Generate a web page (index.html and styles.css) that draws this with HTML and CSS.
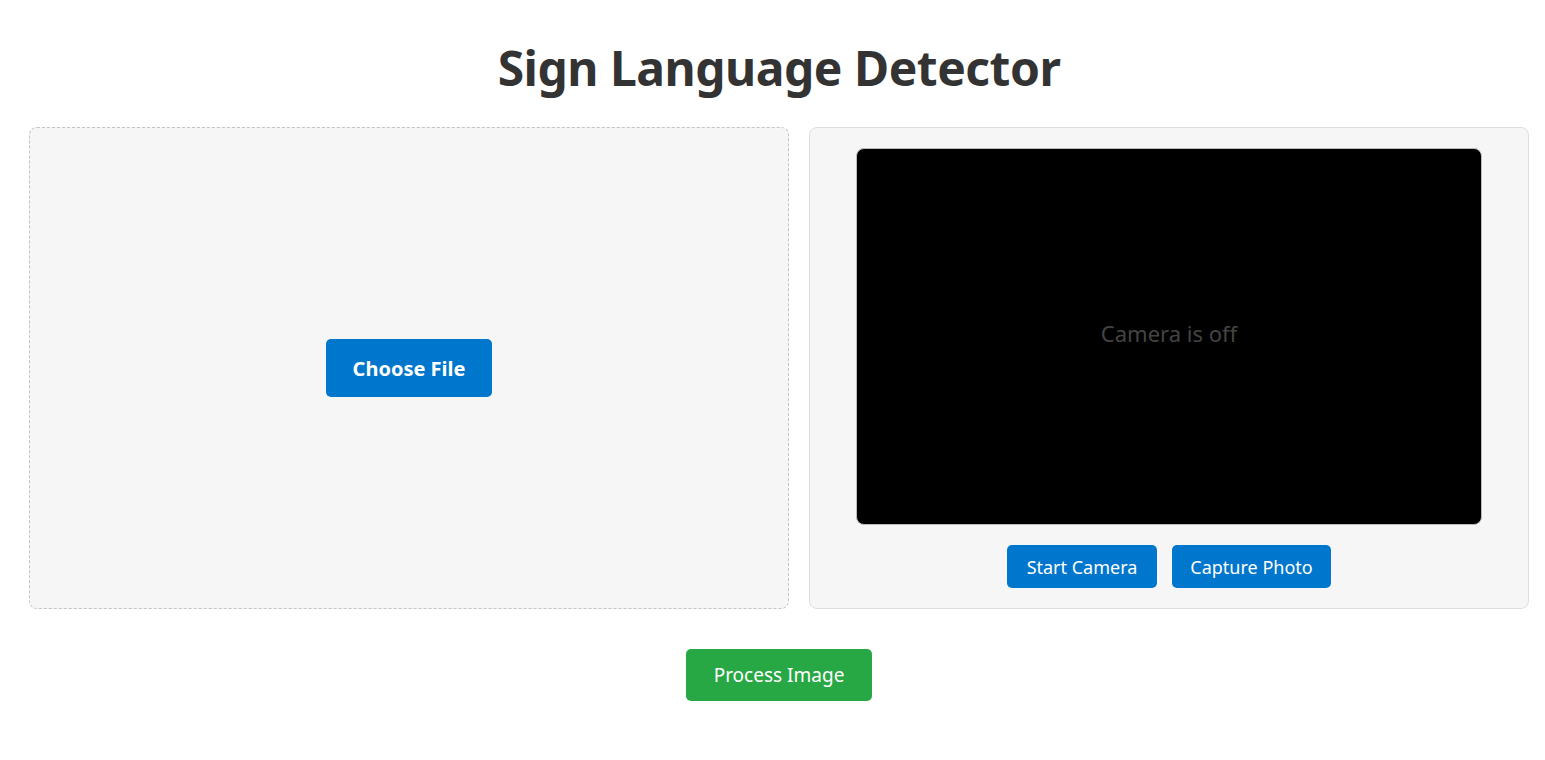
FILE: index.html
```html
<!DOCTYPE html>
<html lang="en">
<head>
<meta charset="utf-8">
<title>Sign Language Detector</title>
<link rel="stylesheet" href="styles.css">
</head>
<body>
<div class="page">
  <h1 class="title">Sign Language Detector</h1>
  <div class="panels">
    <div class="upload">
      <button class="btn btn-choose">Choose File</button>
    </div>
    <div class="camera">
      <div class="video"><span class="video-text">Camera is off</span></div>
      <div class="cam-actions">
        <button class="btn btn-small btn-start">Start Camera</button>
        <button class="btn btn-small btn-capture">Capture Photo</button>
      </div>
    </div>
  </div>
  <div class="process-row">
    <button class="btn btn-process">Process Image</button>
  </div>
</div>
</body>
</html>
```
FILE: styles.css
```css
* { box-sizing: border-box; }
html, body { margin: 0; padding: 0; background: #fff; }
body { font-family: "Noto Sans", "Open Sans", sans-serif; color: #333; }
.page { padding: 0 16px 0 29px; }
.title {
  margin: 0;
  padding-top: 36px;
  height: 127px;
  text-align: center;
  font-size: 48px;
  font-weight: 700;
  line-height: 64px;
  color: #333;
  letter-spacing: -0.5px;
}
.panels {
  display: grid;
  grid-template-columns: 38fr 36fr;
  gap: 20px;
  height: 481px;
}
.upload {
  background: #f6f6f6;
  border: 1px dashed #c4c4c4;
  border-radius: 8px;
  display: flex;
  align-items: center;
  justify-content: center;
}
.camera {
  background: #f6f6f6;
  border: 1px solid #dedede;
  border-radius: 8px;
  padding: 20px;
  display: flex;
  flex-direction: column;
  align-items: center;
}
.video {
  width: 626px;
  height: 377px;
  background: #000;
  border: 1px solid #bbb;
  border-radius: 8px;
  display: flex;
  align-items: center;
  justify-content: center;
  padding-bottom: 8px;
}
.video-text { color: #444; font-size: 22px; }
.cam-actions { display: flex; gap: 15px; margin-top: 20px; }
.btn {
  border: none;
  background: #0077cc;
  color: #fff;
  font-family: inherit;
  border-radius: 5px;
  cursor: pointer;
}
.btn-choose {
  width: 166px; height: 58px;
  font-size: 20px; font-weight: 700;
}
.btn-small { height: 43px; font-size: 18px; }
.btn-start { width: 150px; }
.btn-capture { width: 159px; }
.process-row { display: flex; justify-content: center; margin-top: 41px; }
.btn-process {
  background: #28a745;
  width: 186px; height: 52px;
  font-size: 19px;
}
```
